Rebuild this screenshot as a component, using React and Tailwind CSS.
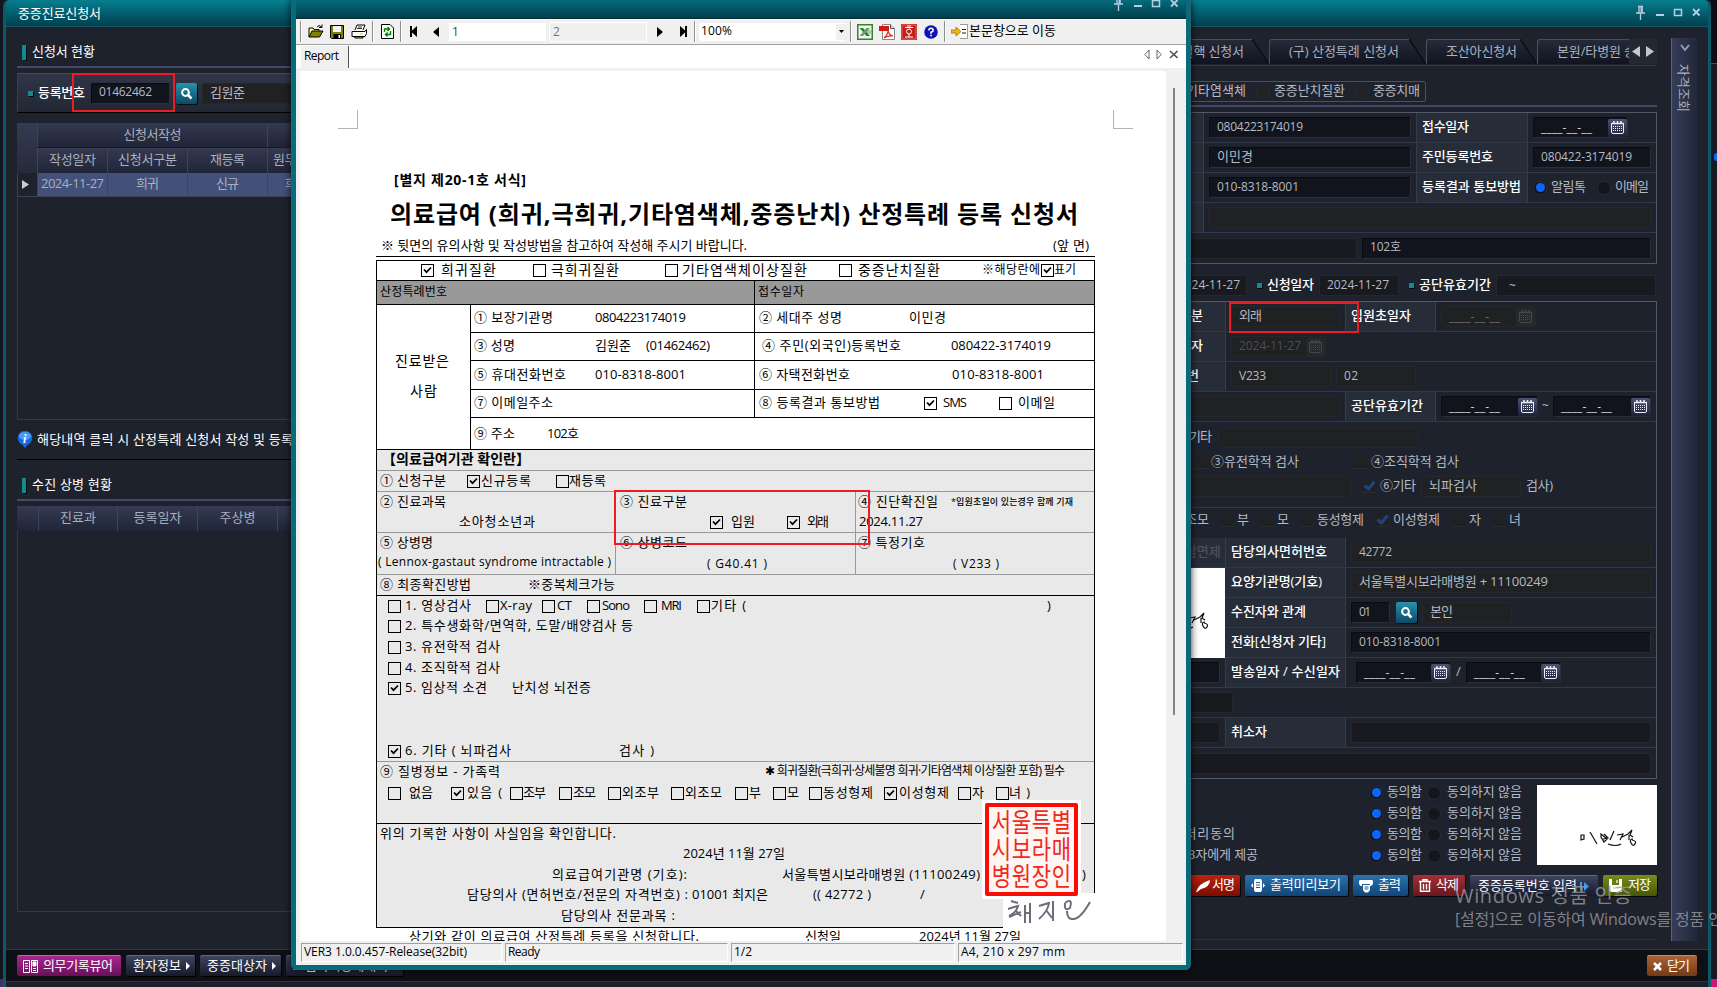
import { useLayoutEffect, useRef, useState } from "react";

/* Text run whose tracking is computed so that it fills `w` pixels. */
function T({ w, className = "", children }) {
  const ref = useRef(null);
  const [ls, setLs] = useState(0);
  useLayoutEffect(() => {
    const n = String(children).length;
    if (w && n > 1) setLs((w - ref.current.getBoundingClientRect().width) / (n - 1));
  }, []);
  return (
    <span className={"inline-flex shrink-0 justify-self-start pb-[2px] whitespace-nowrap " + className}>
      <span ref={ref} style={{ letterSpacing: ls, marginRight: -ls }}>{children}</span>
    </span>
  );
}

/* ---------- dark application window ---------- */

const Input = ({ className = "", tone = "dark", children }) => (
  <div
    className={
      "flex h-[21px] shrink-0 items-center overflow-hidden rounded-[2px] border pl-[7px] text-[12px] text-[#b5bac4] " +
      (tone === "dark" ? "border-t-[#090b10] border-l-[#090b10] border-r-[#2b2e36] border-b-[#2b2e36] bg-[#11141c] " : tone === "mid" ? "border-[#25272d] bg-[#191a1f] " : "border-[#25272b] bg-[#202122] ") +
      className
    }
  >
    {children}
  </div>
);

const CalIcon = ({ dim }) => (
  <div className={"flex h-[18px] w-[19px] shrink-0 items-center justify-center rounded-[2px] " + (dim ? "bg-[#26282b]" : "bg-gradient-to-b from-[#4a5375] to-[#1d2236]")}>
    <svg width="15" height="15" viewBox="0 0 15 15" className={dim ? "text-[#46484c]" : "text-[#eef0f5]"} fill="none" stroke="currentColor">
      <path d="M1.5 3.5h12v8.5q0 1.5-1.500 1.500h-9q-1.500 0-1.500-1.500z" />
      <path d="M1.500 3.500h12M4 1v3M7.500 1v3M11 1v3" strokeWidth="1.500" />
      <path d="M3 6.500h9M3 8.500h9M3 10.500h9" strokeDasharray="1 1" />
    </svg>
  </div>
);

const DateIn = ({ dim, tone, className = "", value }) => (
  <Input tone={tone || "dark"} className={"justify-between " + className}>
    {value ? (
      <T w={62} className="text-[#4c4e52]">{value}</T>
    ) : (
      <T w={51} className={"translate-y-px " + (dim ? "text-[#6b6d70]" : "text-[#d2d5da]")}>____-__-__</T>
    )}
    <CalIcon dim={dim} />
  </Input>
);

const Search = () => (
  <div className="flex h-[21px] w-[21px] shrink-0 items-center justify-center rounded-[2px] bg-gradient-to-b from-[#2793ab] to-[#0a4b67] shadow-[1px_1px_0_#090b10]">
    <svg width="13" height="13" viewBox="0 0 13 13" fill="none" stroke="#fff">
      <circle cx="5.500" cy="5.500" r="3.400" strokeWidth="2" />
      <path d="M8 8l3.500 3.500" strokeWidth="2.500" />
    </svg>
  </div>
);

const Radio = ({ on, tone = "bg-[#14161b]", className = "" }) => (
  <div className={"flex h-[14px] w-[14px] shrink-0 items-center justify-center rounded-full border border-[#292c33] " + tone + " " + className}>
    {on && <div className="h-[9px] w-[9px] rounded-full bg-[#0d66fb]" />}
  </div>
);

const Box = ({ on }) => (
  <div className="flex h-[14px] w-[14px] shrink-0 items-center justify-center border-b border-[#292b2e] bg-[#202122]">
    {on && (
      <svg width="13" height="12" viewBox="0 0 13 12" fill="none" stroke="#1d4380" strokeWidth="3">
        <path d="M1.500 5.500l4 3.500 6-7.500" />
      </svg>
    )}
  </div>
);

const Dot = ({ className = "" }) => <div className={"h-[5px] w-[5px] shrink-0 bg-[#138a92] shadow-[1px_1px_0_#080a0d] " + className} />;

const Label = ({ className = "", w, children }) => (
  <div className={"flex h-full shrink-0 items-center border-r border-[#363b4d] bg-[#272c39] pl-[5px] text-[13px] font-medium text-white " + className}>
    {children && <T w={w}>{children}</T>}
  </div>
);

const Row = ({ className = "", children }) => <div className={"flex h-[30px] items-center border-b border-[#323749] " + className}>{children}</div>;

const Heading = ({ w, className = "", children }) => (
  <div className={"flex items-center pl-[5px] " + className}>
    <div className="h-[15px] w-1 bg-[#138a92] shadow-[1px_1px_0_#080a0d]" />
    <T w={w} className="ml-[6px] text-[13px] text-white">{children}</T>
  </div>
);

const Th = ({ w, className = "", children }) => (
  <div className={"flex h-full shrink-0 items-center justify-center border-l border-[#3d4359] text-[13px] text-[#a9b0be] " + className}>
    {children && <T w={w}>{children}</T>}
  </div>
);

const WindowIcons = () => (
  <svg width="66" height="16" viewBox="0 0 66 16" fill="none" stroke="#b9cde0">
    <path d="M3 1.500h5M4 1.500v6M7 1.500v6M1 8h9M5.500 8v7" strokeWidth="1.300" />
    <path d="M6.500 2v5" strokeWidth="2" />
    <path d="M21 10h8" strokeWidth="2" />
    <path d="M39.500 4.500h7v6h-7zM39 4.500h8" strokeWidth="1.500" />
    <path d="M58 4l6.500 6.500M64.500 4L58 10.500" strokeWidth="1.800" />
  </svg>
);

const DarkButton = ({ w, className = "", children }) => (
  <div className={"flex h-[21px] shrink-0 items-center rounded-[2px] border-t border-[#626883] bg-gradient-to-b from-[#3e445f] to-[#161a2b] pl-[7px] text-[13px] text-white shadow-[1px_1px_0_#000] " + className}>
    <T w={w}>{children}</T>
    <svg width="4" height="8" viewBox="0 0 4 8" className="ml-[5px]"><path d="M0 0l4 4-4 4z" fill="#fff" /></svg>
  </div>
);

function LeftPanel() {
  return (
    <div className="flex w-[500px] shrink-0 flex-col pl-[11px]">
      <Heading w={63} className="mt-[12px] h-[27px]">신청서 현황</Heading>
      <div className="h-[2px] bg-[#45486a]" />
      <div className="mt-[5px] flex h-[40px] items-center border-t border-l border-b border-t-[#454b5f] border-l-[#3a4052] border-b-black bg-gradient-to-b from-[#303649] to-[#222733] pl-[10px]">
        <Dot />
        <T w={47} className="ml-[5px] text-[13px] font-medium text-white">등록번호</T>
        <Input className="ml-[6px] w-[79px]"><T w={53}>01462462</T></Input>
        <div className="ml-[6px]"><Search /></div>
        <Input tone="gray" className="ml-[5px] w-[120px]"><T w={35} className="text-[13px]">김원준</T></Input>
      </div>
      <div className="mt-[10px] flex h-[50px] bg-gradient-to-b from-[#343b52] to-[#262b3a]">
        <div className="w-[20px]" />
        <div className="flex flex-1 flex-col">
          <div className="flex h-[25px] border-b border-[#171a26]">
            <Th w={58} className="w-[230px] bg-gradient-to-b from-[#343a50] to-[#202437]">신청서작성</Th>
            <Th className="w-[200px] bg-gradient-to-b from-[#343a50] to-[#202437]" />
          </div>
          <div className="flex h-[25px] bg-gradient-to-b from-[#343a50] to-[#202437]">
            <Th w={47} className="w-[70px]">작성일자</Th>
            <Th w={59} className="w-[80px]">신청서구분</Th>
            <Th w={35} className="w-[80px]">재등록</Th>
            <Th w={47} className="w-[58px]">원무접수</Th>
          </div>
        </div>
      </div>
      <div className="flex h-[24px] border-b border-[#3c4153]">
        <div className="flex w-[20px] items-center border-l border-[#3c4153] pl-[4px]">
          <svg width="7" height="9"><path d="M0 0l7 4.500-7 4.500z" fill="#c9cbd0" /></svg>
        </div>
        <div className="flex flex-1 bg-[#42507a]">
          <Th w={63} className="w-[70px]">2024-11-27</Th>
          <Th w={23} className="w-[80px]">희귀</Th>
          <Th w={23} className="w-[80px]">신규</Th>
          <Th w={23} className="w-[58px]">희귀</Th>
        </div>
      </div>
      <div className="h-[223px] border-b border-l border-[#343848]" />
      <div className="mt-[1px] flex h-[39px] items-center border-b border-black">
        <svg width="16" height="18" viewBox="0 0 16 18">
          <path d="M8 17l-3-3.500A7.200 7.200 0 1 1 11 13.500z" fill="#1769e0" />
          <ellipse cx="8" cy="5" rx="6" ry="4" fill="#4b9cf0" />
          <text x="6" y="12" fontSize="12" fontStyle="italic" fontWeight="bold" fontFamily="Liberation Serif, serif" fill="#fff">i</text>
        </svg>
        <T w={256} className="ml-[4px] text-[13px] text-white">해당내역 클릭 시 산정특례 신청서 작성 및 등록</T>
      </div>
      <Heading w={80} className="mt-[11px] h-[28px]">수진 상병 현황</Heading>
      <div className="h-[2px] bg-[#45486a]" />
      <div className="mt-[5px] flex h-[25px] bg-gradient-to-b from-[#343b52] to-[#202437]">
        <div className="w-[21px]" />
        <Th w={36} className="w-[79px]">진료과</Th>
        <Th w={48} className="w-[80px]">등록일자</Th>
        <Th w={36} className="w-[80px]">주상병</Th>
        <Th className="w-[80px]" />
      </div>
      <div className="h-[381px] border-b border-l border-[#343848]" />
    </div>
  );
}

const Tab = ({ w, className = "", children }) => (
  <div className={"relative flex h-[25px] shrink-0 items-center rounded-tl-[3px] border-t border-l border-[#494e60] bg-gradient-to-b from-[#252a39] to-[#111420] text-[13px] text-[#a9b0be] " + className}>
    <T w={w}>{children}</T>
    <svg width="17" height="25" viewBox="0 0 17 25" className="absolute -top-px right-0"><path d="M0 0h17v25z" fill="#1e222c" /><path d="M0 0l17 25" stroke="#0b0d13" strokeWidth="1.500" /></svg>
  </div>
);

const Consent = ({ w, className = "", children }) => (
  <div className="grid h-[21px] grid-cols-[219px_18px_41px_19px_76px] items-center text-[13px] text-[#b5bac4]">
    <div className={"flex justify-end " + className}>{children && <T w={w}>{children}</T>}</div>
    <Radio on />
    <T w={35}>동의함</T>
    <Radio className="-ml-px" />
    <T w={75}>동의하지 않음</T>
  </div>
);

const Sign = () => (
  <svg width="60" height="20" viewBox="0 0 60 20" fill="none" stroke="#111" strokeWidth="1.200">
    <path d="M2 6v5l3-1V6zM11 3l7 12M22 5l6 5-3 3-3-5zM25 5l4 4-5 1M35 2l-4 9M29 15q8 3 13 0M38 6l6-1-3 6M43 8l6-3 4-4-2 5 3 2M50 6v5M53 11q5 1 3 4t-4-1 2-4" />
  </svg>
);

const Act = ({ w, className = "", icon, children }) => (
  <div className={"flex h-[21px] shrink-0 items-center rounded-[2px] bg-gradient-to-b text-[13px] text-white shadow-[1px_1px_0_#07080b] " + className}>
    {icon}
    <T w={w}>{children}</T>
  </div>
);

function RightPanel() {
  return (
    <div className="flex w-[507px] shrink-0 flex-col text-[13px] text-[#b5bac4]">
      <div className="mt-[12px] flex h-[27px] shrink-0 items-start border-b border-[#333846]">
        <Tab w={86} className="w-[119px] pl-[7px]">희귀결핵 신청서</Tab>
        <Tab w={110} className="w-[157px] pl-[19px]">(구) 산정특례 신청서</Tab>
        <Tab w={71} className="w-[111px] pl-[19px]">조산아신청서</Tab>
        <div className="flex h-[25px] w-[92px] items-center overflow-hidden rounded-tl-[3px] border-t border-l border-[#494e60] bg-gradient-to-b from-[#252a39] to-[#111420] pl-[19px]">
          <T w={79} className="text-[#a9b0be]">본원/타병원 승</T>
        </div>
        <svg width="28" height="25" viewBox="0 0 28 25" className="bg-[#242833]"><path d="M11 7v11l-8-5.500zM17 7v11l8-5.500z" fill="#c3c8d0" /></svg>
      </div>
      <div className="mt-[15px] flex h-[21px] w-[276px] items-center justify-end rounded-[2px] border border-[#4b5061] pr-[5px]">
        <T w={60}>기타염색체</T>
        <Radio tone="bg-[#222322]" className="mr-[4px] ml-[10px]" />
        <T w={71}>중증난치질환</T>
        <Radio tone="bg-[#222322]" className="mr-[4px] ml-[10px]" />
        <T w={47}>중증치매</T>
      </div>
      <div className="mt-[3px] h-[2px] bg-[#45486a]" />
      <div className="mt-[5px] border-t border-r border-b border-[#535866]">
        <Row>
          <Label className="w-[54px]" />
          <Input className="ml-[5px] w-[202px]"><T w={86}>0804223174019</T></Input>
          <Label w={47} className="ml-[5px] w-[112px] border-l">접수일자</Label>
          <DateIn className="ml-[5px] w-[95px]" />
        </Row>
        <Row>
          <Label className="w-[54px]" />
          <Input className="ml-[5px] w-[202px]"><T w={36} className="text-[13px]">이민경</T></Input>
          <Label w={71} className="ml-[5px] w-[112px] border-l">주민등록번호</Label>
          <Input className="ml-[5px] w-[118px]"><T w={91}>080422-3174019</T></Input>
        </Row>
        <Row>
          <Label className="w-[54px]" />
          <Input className="ml-[5px] w-[202px]"><T w={82}>010-8318-8001</T></Input>
          <Label w={99} className="ml-[5px] w-[112px] border-l">등록결과 통보방법</Label>
          <Radio on className="ml-[5px]" />
          <T w={35} className="ml-[4px]">알림톡</T>
          <Radio className="mr-[4px] ml-[11px]" />
          <T w={34}>이메일</T>
        </Row>
        <Row>
          <Label className="w-[54px]" />
          <Input tone="gray" className="ml-[5px] w-[442px]" />
        </Row>
        <Row className="border-b-0">
          <Input tone="mid" className="w-[207px]" />
          <Input className="ml-[5px] w-[289px]"><T w={31}>102호</T></Input>
        </Row>
      </div>
      <div className="mt-[11px] flex h-[21px] items-center font-medium text-white">
        <Input tone="mid" className="w-[97px] pl-[27px] font-normal"><T w={62}>2024-11-27</T></Input>
        <Dot className="ml-[10px]" />
        <T w={47} className="ml-[5px]">신청일자</T>
        <Input tone="mid" className="ml-[5px] w-[80px] font-normal"><T w={62}>2024-11-27</T></Input>
        <Dot className="ml-[10px]" />
        <T w={72} className="ml-[5px]">공단유효기간</T>
        <Input tone="mid" className="ml-[5px] w-[160px] pl-[12px] font-normal">~</Input>
      </div>
      <div className="mt-[5px] h-[478px] border-t border-r border-b border-[#535866]">
        <Row>
          <Label w={47} className="w-[76px] pl-[6px]">진료구분</Label>
          <Input tone="gray" className="ml-[5px] w-[109px]"><T w={23} className="text-[13px]">외래</T></Input>
          <Label w={60} className="ml-[5px] w-[91px] border-l">입원초일자</Label>
          <DateIn dim tone="gray" className="ml-[5px] w-[95px]" />
        </Row>
        <Row>
          <Label w={47} className="w-[76px] pl-[6px]">확진일자</Label>
          <DateIn dim tone="gray" value="2024-11-27" className="ml-[5px] w-[95px]" />
        </Row>
        <Row>
          <Label w={43} className="w-[76px] pl-[6px]">등록번</Label>
          <Input tone="gray" className="ml-[5px] w-[100px]"><T w={27}>V233</T></Input>
          <Input tone="gray" className="ml-[5px] w-[80px]"><T w={14}>02</T></Input>
        </Row>
        <Row>
          <Input tone="gray" className="w-[190px]" />
          <Label w={72} className="ml-[5px] w-[91px] border-l">공단유효기간</Label>
          <DateIn className="ml-[5px] w-[97px]" />
          <T w={7} className="mr-[4px] ml-[4px] text-[12px]">~</T>
          <DateIn className="w-[98px]" />
        </Row>
        <div className="flex h-[86px] flex-col border-b border-[#323749]">
          <div className="flex h-[30px] items-center">
            <T w={23} className="ml-[39px]">기타</T>
            <Input tone="gray" className="ml-[6px] w-[200px]" />
          </div>
          <div className="grid h-[20px] grid-cols-[18px_142px_18px_100px] items-center pl-[43px]">
            <Box /><T w={88}>③유전학적 검사</T><Box /><T w={88}>④조직학적 검사</T>
          </div>
          <div className="mt-[2px] flex h-[24px] items-center">
            <Input tone="gray" className="mr-[11px] w-[201px]" />
            <Box on />
            <T w={36} className="ml-[4px]">⑥기타</T>
            <Input tone="gray" className="mr-[5px] ml-[5px] w-[100px]"><T w={48} className="text-[13px]">뇌파검사</T></Input>
            <T w={27}>검사)</T>
          </div>
        </div>
        <div className="grid h-[30px] grid-cols-[34px_18px_22px_18px_22px_18px_58px_18px_58px_18px_22px_18px_22px] items-center pb-[6px] pl-[35px]">
          <T w={24}>조모</T>
          <Box /><T>부</T>
          <Box /><T>모</T>
          <Box /><T w={47}>동성형제</T>
          <Box on /><T w={47}>이성형제</T>
          <Box /><T>자</T>
          <Box /><T>녀</T>
        </div>
        <Row>
          <Label w={47} className="w-[76px] pl-[23px]"><span className="text-[#4b505c]">상담면제</span></Label>
          <Label w={96} className="w-[120px]">담당의사면허번호</Label>
          <Input tone="gray" className="ml-[5px] w-[300px]"><T w={33}>42772</T></Input>
        </Row>
        <div className="flex h-[90px]">
          <div className="flex w-[75px] items-center justify-end bg-white pt-[18px] pr-[14px]"><Sign /></div>
          <div className="flex-1">
            <Row>
              <Label w={91} className="w-[121px] pl-[6px]">요양기관명(기호)</Label>
              <Input tone="gray" className="ml-[5px] w-[300px] text-[13px]"><T w={189}>서울특별시보라매병원 + 11100249</T></Input>
            </Row>
            <Row>
              <Label w={75} className="w-[121px] pl-[6px]">수진자와 관계</Label>
              <Input className="mr-[6px] ml-[5px] w-[39px]"><T w={12}>01</T></Input>
              <Search />
              <Input tone="gray" className="ml-[5px] w-[90px] text-[13px]"><T w={23}>본인</T></Input>
            </Row>
            <Row>
              <Label w={95} className="w-[121px] pl-[6px]">전화[신청자 기타]</Label>
              <Input className="ml-[5px] w-[300px]"><T w={82}>010-8318-8001</T></Input>
            </Row>
          </div>
        </div>
        <Row>
          <Input className="w-[70px]" />
          <Label w={109} className="ml-[5px] w-[121px] border-l">발송일자 / 수신일자</Label>
          <DateIn className="ml-[10px] w-[95px]" />
          <T w={5} className="mx-[5px]">/</T>
          <DateIn className="w-[95px]" />
        </Row>
        <Row><Input tone="mid" className="w-[83px]" /></Row>
        <Row>
          <Input tone="mid" className="w-[70px]" />
          <Label w={36} className="ml-[5px] w-[121px] border-l">취소자</Label>
          <Input tone="mid" className="ml-[5px] w-[300px]" />
        </Row>
        <Row className="border-b-0"><Input tone="mid" className="w-[501px]" /></Row>
      </div>
      <div className="mt-[3px] flex justify-between">
        <div>
          <Consent />
          <Consent />
          <Consent w={106} className="w-[85px]">개인정보 처리동의</Consent>
          <Consent w={70} className="w-[108px]">3자에게 제공</Consent>
        </div>
        <div className="mt-[3px] flex h-[80px] w-[120px] items-center justify-end bg-white pt-[28px] pr-[18px]"><Sign /></div>
      </div>
      <div className="mt-[9px] flex justify-between pl-[38px]">
        <Act w={23} className="w-[52px] from-[#b9240f] to-[#7d0d02] pl-[7px]" icon={<svg width="17" height="14" viewBox="0 0 17 14"><path d="M1 13Q4 4 15 1q0 7-9 9L2 13z" fill="#fff" /></svg>}>서명</Act>
        <Act w={71} className="w-[103px] from-[#2a73ae] to-[#124478] pl-[6px]" icon={<svg width="14" height="13" viewBox="0 0 14 13" className="mr-[5px]" fill="#fff"><path d="M4 0h6l1 2v9l-1 2H4l-1-2V2zM2 4v5L0 6.500zM12 4v5l2-2.500z" /><path d="M5 3.500h4M5 6h4M5 8.500h4" stroke="#1d5b93" /></svg>}>출력미리보기</Act>
        <Act w={23} className="w-[55px] from-[#2a73ae] to-[#124478] pl-[6px]" icon={<svg width="14" height="14" viewBox="0 0 14 14" className="mr-[5px]"><path d="M1 1h12l1 1v3l-2 2h-1V5H3v2H1.500L0 5V2zM4 6h7v5l-2 2.500H6L4 11z" fill="#fff" /><path d="M5.500 8h4M5.500 10h4" stroke="#1d5b93" /></svg>}>출력</Act>
        <Act w={23} className="w-[52px] from-[#a52f34] to-[#67191e] pl-[6px]" icon={<svg width="12" height="13" viewBox="0 0 12 13" className="mr-[5px]" fill="none" stroke="#fff" strokeWidth="1.400"><path d="M0 2.500h12M4 2V.8h4V2M1.500 3v9.300h9V3M4.500 5v5.500M7.500 5v5.500" /></svg>}>삭제</Act>
        <div className="flex h-[21px] w-[128px] items-center rounded-[2px] border-t border-[#626883] bg-gradient-to-b from-[#3e445f] to-[#161a2b] pl-[8px] text-white">
          <T w={99}>중증등록번호 입력</T>
          <svg width="9" height="9" viewBox="0 0 9 9" className="ml-[3px]" fill="#3b9bea"><path d="M0 0h2v9H0zM4 0l5 4.500L4 9z" /></svg>
        </div>
        <Act w={23} className="w-[54px] from-[#7a8c1b] to-[#475606] pl-[6px]" icon={<svg width="13" height="13" viewBox="0 0 13 13" className="mr-[6px]"><path d="M0 0h13v13H2l-2-2z" fill="#fff" /><path d="M3 0h7v6H3z" fill="#687a14" /><path d="M7 1h2v3H7zM4 9h6" fill="#fff" stroke="#687a14" strokeWidth=".5" /></svg>}>저장</Act>
      </div>
      <div className="mt-[43px] h-px bg-[#2c303c]" />
    </div>
  );
}

/* ---------- report viewer ---------- */

const C = ({ on }) => (
  <div className="h-[13px] w-[13px] shrink-0 border border-black">
    {on && <svg width="11" height="11" viewBox="0 0 11 11" fill="none" stroke="#000" strokeWidth="1.700"><path d="M2 4.500l2.500 2.700L9 2.500" /></svg>}
  </div>
);

const Sep = ({ className = "" }) => <div className={"h-[21px] w-[2px] border-l border-[#8f8f8f] bg-white " + className} />;

function Toolbar() {
  return (
    <div className="flex h-[26px] items-center border-t border-b border-t-white border-b-[#a0a0a0] bg-[#f0f0f0] pb-px text-[12px]">
      <Sep className="ml-[4px]" />
      <svg width="16" height="15" viewBox="0 0 16 15" className="ml-[6px]"><path d="M1 13V4h4l1 1.500h5V8" fill="#ffff80" stroke="#000" /><path d="M1 13l3-6h11l-3.500 6z" fill="#808000" stroke="#000" /><path d="M9 3q2-3 4.500 0M14 .5v3h-3" fill="none" stroke="#000" /></svg>
      <svg width="14" height="14" viewBox="0 0 14 14" className="ml-[6px]"><path d="M.5.5h13v13h-12l-1-1z" fill="#808000" stroke="#000" /><path d="M3 1h8v6H3z" fill="#f4f4f4" /><path d="M3.500 9h7.500v4.500H3.500z" fill="#000" /><path d="M8.500 10h1.500v3H8.500z" fill="#fff" /></svg>
      <svg width="17" height="15" viewBox="0 0 17 15" className="ml-[7px]" fill="#fff" stroke="#000"><path d="M4 6l2-5h8l-2 5" /><path d="M1 7.500h13l1.500-2v4L14 12.500H1z" /><path d="M3 12.500h9v1.500H4z" fill="#bbb" /><path d="M7 3h4M6 4.500h5" strokeWidth=".8" /><path d="M9 10h3" stroke="#d8d800" /></svg>
      <Sep className="ml-[4px]" />
      <svg width="13" height="15" viewBox="0 0 13 15" className="ml-[7px]"><path d="M.5.5h8.500l3.500 3.500v10.500H.5z" fill="#fff" stroke="#000" /><path d="M3.500 8V5H8M6.500 3L8.500 5 6.500 7M9.500 7v3.500H5M6.500 8.500l-2 2 2 2" fill="none" stroke="#008000" strokeWidth="1.400" /></svg>
      <Sep className="ml-[6px]" />
      <svg width="7" height="11" viewBox="0 0 7 11" className="ml-[8px]"><path d="M0 0h2v4.500L7 0v11L2 6.500V11H0z" /></svg>
      <svg width="6" height="10" viewBox="0 0 6 10" className="ml-[16px]"><path d="M6 0v10L0 5z" /></svg>
      <div className="ml-[10px] flex h-[18px] w-[97px] items-center bg-white pl-[3px] text-[#444]">1</div>
      <div className="ml-[3px] flex h-[20px] w-[98px] items-center border border-white pl-[3px] text-[#777]">2</div>
      <svg width="6" height="10" viewBox="0 0 6 10" className="ml-[10px]"><path d="M0 0v10l6-5z" /></svg>
      <svg width="7" height="11" viewBox="0 0 7 11" className="ml-[17px]"><path d="M7 0H5v4.500L0 0v11l5-4.500V11h2z" /></svg>
      <Sep className="ml-[7px]" />
      <div className="ml-[3px] flex h-[18px] w-[147px] items-center justify-between bg-white pl-[2px]">
        <T w={31}>100%</T>
        <div className="flex h-[16px] w-[10px] items-center justify-center bg-[#f0f0f0]"><svg width="5" height="3"><path d="M0 0h5L2.500 3z" /></svg></div>
      </div>
      <Sep className="ml-[4px]" />
      <svg width="16" height="16" viewBox="0 0 16 16" className="ml-[5px]"><path d="M.75.75h14.500v14.500H.75z" fill="#f3f7ee" stroke="#3d7d35" strokeWidth="1.500" /><path d="M2.500 4h3.500l7 8H9.500z" fill="#2b7d31" /><path d="M9.500 4H13L6 12H2.500z" fill="#62a35a" /><path d="M10 7h4M10 9h4" stroke="#6b9c66" /></svg>
      <svg width="16" height="16" viewBox="0 0 16 16" className="ml-[6px]"><path d="M3.500.5h8l4 4v11h-12z" fill="#fff" stroke="#888" /><path d="M11.500.5v4h4" fill="#ddd" stroke="#555" /><path d="M0 2h10v5H0z" fill="#d11a16" /><path d="M5 14q4-4 4-7 1 4 5 5-5-.5-9 2z" fill="none" stroke="#d8322c" strokeWidth="1.200" /></svg>
      <svg width="16" height="16" viewBox="0 0 16 16" className="ml-[6px]"><path d="M0 0h16v16H0z" fill="#c22019" /><path d="M1 1h14v14H1z" fill="none" stroke="#e06a5e" /><path d="M4 3.500h8M6 2h4M4 13h8M8 10v3" stroke="#fff" /><circle cx="8" cy="7.500" r="2.500" fill="none" stroke="#fff" /></svg>
      <svg width="14" height="14" viewBox="0 0 14 14" className="ml-[7px]"><circle cx="7" cy="7" r="6.800" fill="#1111b8" /><path d="M4.800 5.300Q5 3.200 7 3.200t2.200 2Q9.200 6.500 7 7.200v1.500" fill="none" stroke="#fff" strokeWidth="1.600" /><path d="M6.200 9.800h1.700v1.500H6.200z" fill="#fff" /></svg>
      <Sep className="ml-[6px]" />
      <svg width="17" height="15" viewBox="0 0 17 15" className="ml-[5px]"><path d="M9 .5h7.500v14H9" fill="#fff" stroke="#999" /><path d="M0 6h5V3l5 4.500L5 12V9H0z" fill="#f0b414" stroke="#a77600" strokeWidth=".8" /><path d="M11 5.500h4M11 9h4" stroke="#222" /></svg>
      <T w={87} className="ml-[1px] text-[13px]">본문창으로 이동</T>
    </div>
  );
}

const Line = ({ className = "", children }) => <div className={"flex items-center " + className}>{children}</div>;

function PatientRow({ className = "", left, right }) {
  return (
    <div className={"flex border-b border-black " + className}>
      <div className="flex w-[284px] shrink-0 items-center border-r border-black pl-[3px]">{left}</div>
      <div className="flex flex-1 items-center pl-[4px]">{right}</div>
    </div>
  );
}

const SEAL = ["서울특별", "시보라매", "병원장인"];

function Report() {
  return (
    <div className="relative flex h-[870px] w-[866px] shrink-0 flex-col overflow-hidden bg-white pl-[76px] text-[13px] leading-none text-black [&>*]:shrink-0">
      <div className="-ml-[38px] mt-[39px] flex w-[795px] justify-between">
        <div className="h-[19px] w-[20px] border-r border-b border-[#b4b4b4]" />
        <div className="h-[19px] w-[20px] border-b border-l border-[#b4b4b4]" />
      </div>
      <T w={132} className="mt-[44px] ml-[18px] h-[17px] self-start text-[14px] font-bold">[별지 제20-1호 서식]</T>
      <T w={688} className="mt-[9px] ml-[14px] h-[30px] self-start text-[24px] leading-[29px] font-bold">의료급여 (희귀,극희귀,기타염색체,중증난치) 산정특례 등록 신청서</T>
      <div className="mt-[8px] flex h-[20px] w-[719px] items-center justify-between border-b border-black pr-[6px] pl-[5px]">
        <T w={366}>※ 뒷면의 유의사항 및 작성방법을 참고하여 작성해 주시기 바랍니다.</T>
        <T w={36}>(앞 면)</T>
      </div>
      <div className="mt-[3px] w-[719px] border border-black">
        <div className="grid h-[19px] grid-cols-[20px_92px_18px_114px_17px_157px_19px_124px_59px_13px_30px] items-center pl-[44px] text-[14px]">
          <C on /><T w={55}>희귀질환</T><C /><T w={68}>극희귀질환</T><C /><T w={125}>기타염색체이상질환</T><C /><T w={82}>중증난치질환</T>
          <T w={58} className="text-[12px]">※해당란에</T><C on /><T w={22} className="text-[12px]">표기</T>
        </div>
        <div className="flex h-[25px] border-y border-black bg-[#999]">
          <Line className="w-[378px] border-r border-black pl-[3px]"><T w={67} className="text-[12px]">산정특례번호</T></Line>
          <Line className="pl-[3px]"><T w={46} className="text-[12px]">접수일자</T></Line>
        </div>
        <div className="flex">
          <div className="flex w-[94px] flex-col items-center justify-center gap-[14px] border-r border-b border-black text-[14px]">
            <T w={54} className="-ml-[3px]">진료받은</T><T w={27}>사람</T>
          </div>
          <div className="flex-1">
            <PatientRow className="h-[28px]"
              left={<><T w={79} className="mr-[42px]">① 보장기관명</T><T w={91}>0804223174019</T></>}
              right={<><T w={83} className="mr-[67px]">② 세대주 성명</T><T w={37}>이민경</T></>} />
            <PatientRow className="h-[28px]"
              left={<><T w={41} className="mr-[80px]">③ 성명</T><T w={36} className="mr-[15px]">김원준</T><T w={64}>(01462462)</T></>}
              right={<><T w={139} className="mr-[50px] ml-[3px]">④ 주민(외국인)등록번호</T><T w={100}>080422-3174019</T></>} />
            <PatientRow className="h-[29px]"
              left={<><T w={92} className="mr-[29px]">⑤ 휴대전화번호</T><T w={91}>010-8318-8001</T></>}
              right={<><T w={91} className="mr-[102px]">⑥ 자택전화번호</T><T w={92}>010-8318-8001</T></>} />
            <PatientRow className="h-[28px]"
              left={<T w={79}>⑦ 이메일주소</T>}
              right={<div className="grid grid-cols-[165px_19px_56px_19px_40px] items-center"><T w={121}>⑧ 등록결과 통보방법</T><C on /><T w={24}>SMS</T><C /><T w={37}>이메일</T></div>} />
            <Line className="h-[32px] border-b border-black pt-[1px] pl-[3px]"><T w={41} className="mr-[32px]">⑨ 주소</T><T w={32}>102호</T></Line>
          </div>
        </div>

        <div className="bg-[#e9e9e9]">
          <Line className="h-[21px] border-b border-[#999] pl-[5px] text-[14px] font-bold"><T w={148}>【의료급여기관 확인란】</T></Line>
          <div className="grid h-[21px] grid-cols-[87px_14px_75px_13px_60px] items-center border-b border-[#999] pl-[3px]">
            <T w={66}>① 신청구분</T><C on /><T w={50}>신규등록</T><C /><T w={37}>재등록</T>
          </div>
          <div className="flex h-[41px] border-b border-[#999]">
            <div className="w-[239px] border-r border-[#999]">
              <Line className="h-[20px] pl-[3px]"><T w={66}>② 진료과목</T></Line>
              <Line className="h-[21px] pl-[82px]"><T w={76}>소아청소년과</T></Line>
            </div>
            <div className="w-[240px] border-r border-[#999]">
              <Line className="h-[20px] pl-[4px]"><T w={67}>③ 진료구분</T></Line>
              <div className="grid h-[21px] grid-cols-[21px_56px_20px_30px] items-center pl-[94px]"><C on /><T w={24}>입원</T><C on /><T w={22}>외래</T></div>
            </div>
            <div>
              <Line className="h-[20px] pl-[2px]"><T w={80} className="mr-[13px]">④ 진단확진일</T><T w={122} className="text-[9px] font-medium">*입원초일이 있는경우 함께 기재</T></Line>
              <Line className="h-[21px] pl-[3px]"><T w={64}>2024.11.27</T></Line>
            </div>
          </div>
          <div className="flex h-[42px] border-b border-[#999]">
            <div className="w-[239px] border-r border-[#999]">
              <Line className="h-[21px] pl-[3px]"><T w={53}>⑤ 상병명</T></Line>
              <Line className="h-[18px] pl-px"><T w={233} className="text-[12px]">( Lennox-gastaut syndrome intractable )</T></Line>
            </div>
            <div className="w-[240px] border-r border-[#999]">
              <Line className="h-[21px] pl-[4px]"><T w={67}>⑥ 상병코드</T></Line>
              <Line className="h-[21px] pl-[91px]"><T w={60} className="text-[12px]">( G40.41 )</T></Line>
            </div>
            <div>
              <Line className="h-[21px] pl-[2px]"><T w={67}>⑦ 특정기호</T></Line>
              <Line className="h-[21px] pl-[97px]"><T w={46} className="text-[12px]">( V233 )</T></Line>
            </div>
          </div>
          <Line className="h-[21px] border-b border-black pl-[3px]"><T w={91} className="mr-[57px]">⑧ 최종확진방법</T><T w={87}>※중복체크가능</T></Line>
          <div className="h-[166px] border-b border-[#999] pl-[11px]">
            <div className="grid h-[20px] grid-cols-[17px_81px_14px_42px_15px_30px_15px_42px_17px_36px_14px_336px_10px] items-center">
              <C /><T w={66}>1. 영상검사</T><C /><T w={32}>X-ray</T><C /><T w={15}>CT</T><C /><T w={28}>Sono</T><C /><T w={21}>MRI</T><C /><T w={35}>기타 (</T><T>)</T>
            </div>
            <Line className="h-[21px] gap-[4px]"><C /><T w={228}>2. 특수생화학/면역학, 도말/배양검사 등</T></Line>
            <Line className="h-[21px] gap-[4px]"><C /><T w={95}>3. 유전학적 검사</T></Line>
            <Line className="h-[20px] gap-[4px]"><C /><T w={95}>4. 조직학적 검사</T></Line>
            <Line className="h-[21px] gap-[4px]"><C on /><T w={82} className="mr-[21px]">5. 임상적 소견</T><T w={79}>난치성 뇌전증</T></Line>
            <Line className="mt-[42px] h-[21px] gap-[4px]"><C on /><T w={106} className="mr-[104px]">6. 기타 ( 뇌파검사</T><T w={35}>검사 )</T></Line>
          </div>
          <div className="h-[62px] border-b border-black">
            <Line className="h-[20px] pl-[3px]"><T w={120} className="mr-[265px]">⑨ 질병정보 - 가족력</T><T w={300} className="text-[12px]">✱ 희귀질환(극희귀·상세불명 희귀·기타염색체 이상질환 포함) 필수</T></Line>
            <div className="grid h-[22px] grid-cols-[21px_42px_16px_43px_13px_36px_14px_35px_14px_49px_14px_50px_14px_24px_14px_22px_14px_61px_15px_59px_14px_24px_13px_30px] items-center pl-[11px]">
              <C /><T w={24}>없음</T><C on /><T w={35}>있음 (</T><C /><T w={23}>조부</T><C /><T w={23}>조모</T><C /><T w={37}>외조부</T><C /><T w={37}>외조모</T>
              <C /><T>부</T><C /><T>모</T><C /><T w={50}>동성형제</T><C on /><T w={50}>이성형제</T><C /><T>자</T><C /><T w={21}>녀 )</T>
            </div>
          </div>
          <div className="h-[103px]">
            <Line className="h-[20px] pl-[3px]"><T w={236}>위의 기록한 사항이 사실임을 확인합니다.</T></Line>
            <Line className="h-[21px] pl-[306px]"><T w={102}>2024년 11월 27일</T></Line>
            <Line className="h-[20px] pl-[175px]"><T w={135} className="mr-[95px]">의료급여기관명 (기호):</T><T w={198} className="mr-[102px]">서울특별시보라매병원 (11100249)</T><T>)</T></Line>
            <Line className="h-[21px] pl-[90px]"><T w={221} className="mr-[4px]">담당의사 (면허번호/전문의 자격번호) :</T><T w={76} className="mr-[45px]">01001 최지은</T><T w={58} className="mr-[49px]">(( 42772 )</T><T>/</T></Line>
            <Line className="h-[21px] pl-[184px]"><T w={114}>담당의사 전문과목 :</T></Line>
          </div>
        </div>
      </div>
      <Line className="h-[18px] pl-[33px]"><T w={290} className="mr-[106px]">상기와 같이 의료급여 산정특례 등록을 신청합니다.</T><T w={36} className="mr-[78px]">신청일</T><T w={102}>2024년 11월 27일</T></Line>

      <div className="absolute top-[822px] left-[703px] h-[38px] w-[93px] bg-white">
        <svg width="93" height="38" viewBox="0 0 93 38" fill="none" stroke="#6d6d78" strokeWidth="2">
          <path d="M8 8l7 2M5 16q6-2 10-3-2 7-9 10M12 17l6 6M6 24l12-5M22 12v18M27 10v20M22 20h5M36 13l10-3q-1 8-10 16M43 17l6 8M50 8v20M62 10q8-6 5 5-6 4-5-5M64 18q0 9 7 8t16-17" />
        </svg>
      </div>
      <div className="absolute top-[729px] left-[682px] h-[99px] w-[99px] bg-white p-[3px]">
        <div className="flex h-[93px] w-[93px] flex-col justify-between rounded-[2px] border-[4px] border-[#fb0d06] bg-[#fff5f2] p-[3px] text-[#f0281c]">
          {SEAL.map((r) => (
            <div key={r} className="flex h-[25px] justify-between">
              {[...r].map((c) => (
                <span key={c} className="flex w-[19px] scale-y-[1.250] items-center justify-center text-[21px] leading-none">{c}</span>
              ))}
            </div>
          ))}
        </div>
      </div>
      <div className="absolute top-[419px] left-[314px] h-[55px] w-[256px] border-2 border-[#ed1c24]" />
    </div>
  );
}

const Status = ({ w, className = "", children }) => (
  <div className={"flex h-[19px] items-center border border-t-[#a0a0a0] border-l-[#a0a0a0] border-r-white border-b-white pl-[2px] text-[12px] " + className}>
    <T w={w}>{children}</T>
  </div>
);

function Viewer() {
  return (
    <div className="absolute top-0 left-[292px] flex h-[969px] w-[898px] flex-col rounded-b-[4px] border-x-[4px] border-b-[4px] border-[#066b7a] bg-[#f0f0f0] text-black shadow-[0_0_8px_#000] outline outline-[#2d5f6c]">
      <div className="flex h-[19px] shrink-0 items-start justify-end border-b border-[#0a2c36] bg-gradient-to-b from-[#056c7c] to-[#013f4e] pr-[7px]">
        <div className="-mt-[4px]"><WindowIcons /></div>
      </div>
      <Toolbar />
      <div className="flex h-[23px] items-end justify-between bg-white pr-[8px] pl-[5px] text-[12px]">
        <div className="flex h-[22px] w-[48px] items-center border-r border-[#555] bg-[#f0f0f0] pl-[3px]"><T w={35}>Report</T></div>
        <svg width="34" height="23" viewBox="0 0 34 23" fill="none" stroke="#555"><path d="M5 5v9L.8 9.500zM13 5v9l4.200-4.500z" strokeWidth=".9" /><path d="M26 6l7.500 7M33.500 6L26 13" strokeWidth="1.600" /></svg>
      </div>
      <div className="flex pt-[3px] pl-[4px]">
        <Report />
        <div className="mt-[17px] ml-[7px] h-[627px] w-[2px] bg-[#858585]" />
      </div>
      <div className="flex gap-[3px] pt-[2px] pl-[5px]">
        <Status w={163} className="w-[201px]">VER3 1.0.0.457-Release(32bit)</Status>
        <Status w={32} className="w-[223px]">Ready</Status>
        <Status w={18} className="w-[224px]">1/2</Status>
        <Status w={104} className="w-[225px]">A4, 210 x 297 mm</Status>
      </div>
    </div>
  );
}

export default function App() {
  return (
    <div className="relative h-[987px] w-[1717px] overflow-hidden bg-[#14161f] font-[family-name:'Open_Sans','Noto_Sans_CJK_KR',sans-serif] leading-none">
      <div className="absolute top-0 right-0 flex h-full w-[6px] flex-col items-end bg-[#171a25]">
        <div className="h-[64px] w-full border-b border-[#454a5c] bg-[#0c0d13]" />
        <div className="mt-[89px] h-[8px] w-[3px] rounded-l-full bg-[#0d66fb]" />
        <div className="mt-auto h-[8px] w-full bg-[#d3147c]" />
      </div>
      <div className="absolute top-[979px] left-0 h-[8px] w-[3px] bg-[#453168]" />

      <div className="absolute top-0 left-[3px] flex h-[987px] w-[1708px] flex-col rounded-t-[6px] border-x-[3px] border-[#0a5a68] bg-[#1e222c]">
        <div className="flex h-[27px] shrink-0 items-center justify-between rounded-t-[4px] border-b border-[#1c5763] bg-gradient-to-b from-[#067f8f] to-[#01404f] pr-[7px] pl-[12px]">
          <T w={83} className="pt-[2px] text-[13px] text-white">중증진료신청서</T>
          <WindowIcons />
        </div>
        <div className="flex h-[922px] shrink-0">
          <LeftPanel />
          <div className="w-[644px] shrink-0" />
          <RightPanel />
          <div className="mt-[11px] ml-[14px] flex h-[903px] w-[26px] shrink-0 flex-col items-center border-l border-[#5a6178] bg-gradient-to-r from-[#363d56] to-[#22273a]">
            <svg width="10" height="8" viewBox="0 0 10 8" className="mt-[6px]" fill="none" stroke="#8ba2b5" strokeWidth="2"><path d="M1 1l4 5 4-5" /></svg>
            <span className="mt-[12px] mr-[2px] text-[13px] text-[#a9b0be] [text-orientation:sideways] [writing-mode:vertical-rl]">자격조회</span>
          </div>
        </div>
        <div className="flex h-[32px] shrink-0 items-center border-t border-[#343740] bg-[#0f1016] pr-[11px] pl-[11px]">
          <div className="flex h-[21px] w-[104px] items-center rounded-[2px] border-t border-[#cf5cb8] bg-gradient-to-b from-[#ab2591] to-[#69105a] pl-[6px] text-[13px] text-white">
            <svg width="15" height="13" viewBox="0 0 15 13" fill="none" stroke="#fff"><path d="M.5.5h6v12h-6zM8.500.5h6v12h-6zM2 3.500h3M2 6h3M2 8.500h3M10 8.500h3M10 10.500h3" /><path d="M10 2h3v4h-3z" fill="#fff" /></svg>
            <T w={70} className="ml-[5px]">의무기록뷰어</T>
          </div>
          <DarkButton w={48} className="ml-[5px] w-[69px]">환자정보</DarkButton>
          <DarkButton w={60} className="ml-[5px] w-[81px]">중증대상자</DarkButton>
          <DarkButton w={95} className="ml-[5px] w-[117px]">보험자격상세내역</DarkButton>
          <div className="ml-auto flex h-[21px] w-[50px] items-center rounded-[2px] border-t border-[#cf8852] bg-gradient-to-b from-[#ab6433] to-[#713b17] pl-[6px] text-[13px] text-white">
            <svg width="9" height="9" viewBox="0 0 9 9" stroke="#fff" strokeWidth="2.500"><path d="M1 1l7 7M8 1L1 8" /></svg>
            <T w={23} className="ml-[5px]">닫기</T>
          </div>
        </div>
        <div className="flex-1 border-t border-[#2f3340] bg-[#1b1f2b]" />
      </div>

      <Viewer />

      <div className="absolute top-[73px] left-[72px] h-[39px] w-[103px] border-2 border-[#ed1c24]" />
      <div className="absolute top-[302px] left-[1229px] h-[31px] w-[130px] border-2 border-[#ed1c24]" />
      <div className="absolute top-[886px] left-[1455px] flex flex-col items-start gap-[3px] text-[#9a9ca0]/80">
        <T w={177} className="text-[20px]">Windows 정품 인증</T>
        <T w={330} className="text-[16px]">[설정]으로 이동하여 Windows를 정품 인증합니다.</T>
      </div>
    </div>
  );
}
